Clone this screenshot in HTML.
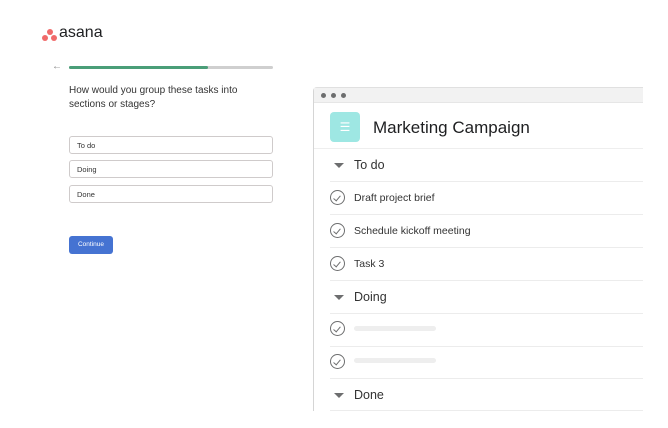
<!DOCTYPE html>
<html><head><style>
*{margin:0;padding:0;box-sizing:border-box}
body{width:668px;height:428px;background:#fff;font-family:"Liberation Sans",sans-serif;position:relative;overflow:hidden;color:#1e1f21}
.a{position:absolute}
.inp{position:absolute;left:69px;width:204px;height:18px;border:1px solid #cfcbcb;border-radius:3px;font-size:7.5px;padding:4px 0 0 7px;color:#333}
.row{position:absolute;left:330px;width:313px;border-bottom:1px solid #ececec}
.sec{font-size:12.5px;color:#333}
.tri{position:absolute;left:4px;width:0;height:0;border-left:5px solid transparent;border-right:5px solid transparent;border-top:5px solid #6d6e6f}
.chk{position:absolute;left:0;width:15px;height:15px;border:1px solid #6d6e6f;border-radius:50%}
.chk:after{content:"";position:absolute;left:4px;top:3px;width:3px;height:6px;border-right:1px solid #6d6e6f;border-bottom:1px solid #6d6e6f;transform:rotate(40deg)}
.tt{position:absolute;left:24px;font-size:10.5px;color:#333}
.ph{position:absolute;left:24px;width:82px;height:5px;background:#eeeeee;border-radius:3px}
</style></head><body>
<div class="a" style="left:47px;top:29px;width:6px;height:6px;border-radius:50%;background:#f06a6a"></div>
<div class="a" style="left:42px;top:35px;width:6px;height:6px;border-radius:50%;background:#f06a6a"></div>
<div class="a" style="left:51px;top:35px;width:6px;height:6px;border-radius:50%;background:#f06a6a"></div>
<div class="a" style="left:59px;top:24px;font-size:16px;color:#1e1f21">asana</div>
<div class="a" style="left:52px;top:61px;font-size:10px;color:#888">←</div>
<div class="a" style="left:69px;top:66px;width:204px;height:3px;background:#cfcfcf;border-radius:2px"></div>
<div class="a" style="left:69px;top:66px;width:139px;height:3px;background:#4a9e78;border-radius:2px"></div>
<div class="a" style="left:69px;top:84px;font-size:10px;line-height:14px;color:#333">How would you group these tasks into<br>sections or stages?</div>
<div class="inp" style="top:136px">To do</div>
<div class="inp" style="top:160px">Doing</div>
<div class="inp" style="top:185px">Done</div>
<div class="a" style="left:69px;top:236px;width:44px;height:18px;background:#4573d2;border-radius:3px;color:#fff;font-size:6.5px;text-align:center;line-height:18px">Continue</div>

<div class="a" style="left:313px;top:87px;width:330px;height:324px;border-left:1px solid #d5d5d5;border-top:1px solid #e0e0e0;border-radius:4px 0 0 0"></div>
<div class="a" style="left:314px;top:88px;width:329px;height:15px;background:#f2f2f2;border-bottom:1px solid #e6e6e6"></div>
<div class="a" style="left:321px;top:93px;width:5px;height:5px;border-radius:50%;background:#6d6e6f"></div>
<div class="a" style="left:331px;top:93px;width:5px;height:5px;border-radius:50%;background:#6d6e6f"></div>
<div class="a" style="left:341px;top:93px;width:5px;height:5px;border-radius:50%;background:#6d6e6f"></div>
<div class="a" style="left:330px;top:112px;width:30px;height:30px;border-radius:4px;background:#9ee7e3;color:#fff;font-size:12px;text-align:center;line-height:30px">☰</div>
<div class="a" style="left:373px;top:118px;font-size:17px;color:#1e1f21">Marketing Campaign</div>
<div class="a" style="left:314px;top:148px;width:329px;border-bottom:1px solid #eeeeee"></div>

<div class="row" style="top:150px;height:32px"><div class="tri" style="top:13px"></div><div class="sec a" style="left:24px;top:8px">To do</div></div>
<div class="row" style="top:182px;height:33px"><div class="chk" style="top:8px"></div><div class="tt" style="top:10px">Draft project brief</div></div>
<div class="row" style="top:215px;height:33px"><div class="chk" style="top:8px"></div><div class="tt" style="top:10px">Schedule kickoff meeting</div></div>
<div class="row" style="top:248px;height:33px"><div class="chk" style="top:8px"></div><div class="tt" style="top:10px">Task 3</div></div>
<div class="row" style="top:281px;height:33px"><div class="tri" style="top:14px"></div><div class="sec a" style="left:24px;top:9px">Doing</div></div>
<div class="row" style="top:314px;height:33px"><div class="chk" style="top:7px"></div><div class="ph" style="top:12px"></div></div>
<div class="row" style="top:347px;height:32px"><div class="chk" style="top:7px"></div><div class="ph" style="top:11px"></div></div>
<div class="row" style="top:379px;height:32px"><div class="tri" style="top:14px"></div><div class="sec a" style="left:24px;top:9px">Done</div></div>
</body></html>
